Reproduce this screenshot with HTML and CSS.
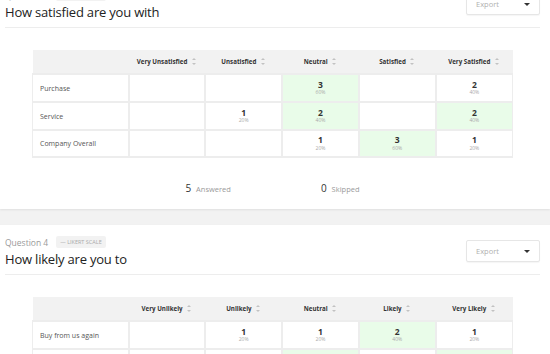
FILE: index.html
```html
<!DOCTYPE html>
<html>
  <head>
    <title>Survey Results</title>
    <link rel="stylesheet" href="styles.css">
  </head>
  <body>
    <div class="page">

      <section class="card card-first">
        <div class="q-head">
          <div class="q-titles">
            <div class="q-meta">
              <span class="q-num">Question 3</span>
              <span class="badge">&mdash; Likert Scale</span>
            </div>
            <h2 class="q-title">How satisfied are you with</h2>
          </div>
          <div class="export">
            <span>Export</span>
            <span class="caret"></span>
          </div>
        </div>

        <table class="grid">
          <thead>
            <tr>
              <th class="label-col"></th>
              <th>Very Unsatisfied <span class="sort"></span></th>
              <th>Unsatisfied <span class="sort"></span></th>
              <th>Neutral <span class="sort"></span></th>
              <th>Satisfied <span class="sort"></span></th>
              <th>Very Satisfied <span class="sort"></span></th>
            </tr>
          </thead>
          <tbody>
            <tr>
              <td class="row-label">Purchase</td>
              <td></td>
              <td></td>
              <td class="top"><b>3</b><small>60%</small></td>
              <td></td>
              <td><b>2</b><small>40%</small></td>
            </tr>
            <tr>
              <td class="row-label">Service</td>
              <td></td>
              <td><b>1</b><small>20%</small></td>
              <td class="top"><b>2</b><small>40%</small></td>
              <td></td>
              <td class="top"><b>2</b><small>40%</small></td>
            </tr>
            <tr class="last">
              <td class="row-label">Company Overall</td>
              <td></td>
              <td></td>
              <td><b>1</b><small>20%</small></td>
              <td class="top"><b>3</b><small>60%</small></td>
              <td><b>1</b><small>20%</small></td>
            </tr>
          </tbody>
        </table>

        <div class="stats">
          <div class="stat"><span class="stat-num">5</span> Answered</div>
          <div class="stat"><span class="stat-num">0</span> Skipped</div>
        </div>
      </section>

      <section class="card">
        <div class="q-head">
          <div class="q-titles">
            <div class="q-meta">
              <span class="q-num">Question 4</span>
              <span class="badge">&mdash; Likert Scale</span>
            </div>
            <h2 class="q-title">How likely are you to</h2>
          </div>
          <div class="export">
            <span>Export</span>
            <span class="caret"></span>
          </div>
        </div>

        <table class="grid">
          <thead>
            <tr>
              <th class="label-col"></th>
              <th>Very Unlikely <span class="sort"></span></th>
              <th>Unlikely <span class="sort"></span></th>
              <th>Neutral <span class="sort"></span></th>
              <th>Likely <span class="sort"></span></th>
              <th>Very Likely <span class="sort"></span></th>
            </tr>
          </thead>
          <tbody>
            <tr>
              <td class="row-label">Buy from us again</td>
              <td></td>
              <td><b>1</b><small>20%</small></td>
              <td><b>1</b><small>20%</small></td>
              <td class="top"><b>2</b><small>40%</small></td>
              <td><b>1</b><small>20%</small></td>
            </tr>
            <tr>
              <td class="row-label">Recommend us</td>
              <td></td>
              <td></td>
              <td class="top"><b>2</b><small>40%</small></td>
              <td></td>
              <td class="top"><b>2</b><small>40%</small></td>
            </tr>
          </tbody>
        </table>
      </section>

    </div>
  </body>
</html>
```

FILE: styles.css
```css
:root {
  --page-bg: #f2f2f2;
  --card-bg: #ffffff;
  --line: #ededed;
  --head-bg: #f2f2f2;
  --top-bg: #e9fce9;
  --text: #333333;
  --muted: #999999;
}

body {
  margin: 0;
  font-family: 'Open Sans', 'Noto Sans', sans-serif;
  color: var(--text);
  background: var(--page-bg);
  overflow: hidden;
}

.page {
  display: flex;
  flex-direction: column;
  gap: 16px;
}

.card {
  background: var(--card-bg);
  padding: 0 10px 11px 5px;
  box-shadow: 0 1px 2px rgba(0, 0, 0, 0.08);
}

/* page is scrolled down a little */
.card-first {
  margin-top: -22px;
}

.q-head {
  display: flex;
  justify-content: space-between;
  align-items: flex-start;
  padding-top: 10px;
  padding-bottom: 5px;
  border-bottom: 1px solid var(--line);
}

.q-meta {
  display: flex;
  align-items: center;
  gap: 8px;
  height: 14px;
}

.q-num {
  font-size: 8.5px;
  color: #9a9a9a;
}

.badge {
  font-size: 5.5px;
  text-transform: uppercase;
  color: #aaaaaa;
  background: #f2f2f2;
  padding: 2px 4px;
  border-radius: 2px;
}

.q-title {
  margin: 0;
  font-size: 13px;
  font-weight: 400;
  line-height: 20px;
  letter-spacing: -0.2px;
  color: #222222;
}

.export {
  margin-top: 5px;
  width: 74px;
  height: 22px;
  box-sizing: border-box;
  display: flex;
  align-items: center;
  justify-content: space-between;
  padding: 0 9px;
  border: 1px solid #e6e6e6;
  border-radius: 2px;
  box-shadow: 0 1px 1px rgba(0, 0, 0, 0.04);
  font-size: 7.5px;
  color: #b0b0b0;
}

.caret {
  width: 0;
  height: 0;
  border-left: 3px solid transparent;
  border-right: 3px solid transparent;
  border-top: 3px solid #333333;
}

/* Result grid */
.grid {
  margin: 22px 0 0 27px;
  width: 481px;
  border-collapse: collapse;
  table-layout: fixed;
}

.grid th {
  height: 23px;
  padding: 0;
  background: var(--head-bg);
  font-size: 6.2px;
  font-weight: 700;
  color: #333333;
  text-align: center;
  white-space: nowrap;
}

.grid th.label-col {
  width: 96px;
}

.sort {
  position: relative;
  display: inline-block;
  width: 5px;
  height: 7px;
  margin-left: 3px;
  vertical-align: -1px;
}

.sort::before,
.sort::after {
  content: "";
  position: absolute;
  left: 0;
  border-left: 2.5px solid transparent;
  border-right: 2.5px solid transparent;
}

.sort::before {
  top: 0;
  border-bottom: 2.5px solid #c2c2c2;
}

.sort::after {
  bottom: 0;
  border-top: 2.5px solid #c2c2c2;
}

.grid td {
  height: 26px;
  padding: 0;
  border: 2px solid var(--line);
  text-align: center;
  vertical-align: middle;
  line-height: 1;
}

.grid tr > td:first-child {
  border-left-width: 1px;
}

.grid tr > td:last-child {
  border-right-width: 1px;
}

.grid tr.last td {
  height: 25px;
}

.grid td.row-label {
  text-align: left;
  padding-left: 7px;
  font-size: 7px;
  color: #555555;
}

.grid td.top {
  background: var(--top-bg);
}

.grid td b {
  display: block;
  font-size: 8.5px;
  font-weight: 700;
  color: #333333;
}

.grid td small {
  display: block;
  margin-top: 1px;
  font-size: 5px;
  color: #aaaaaa;
}

.stats {
  display: flex;
  justify-content: center;
  gap: 90px;
  margin: 20px 0 0 27px;
  width: 481px;
  height: 20px;
  align-items: center;
}

.stat {
  font-size: 7.5px;
  color: #9a9a9a;
}

.stat-num {
  font-size: 10px;
  color: #333333;
  margin-right: 3px;
}
```
